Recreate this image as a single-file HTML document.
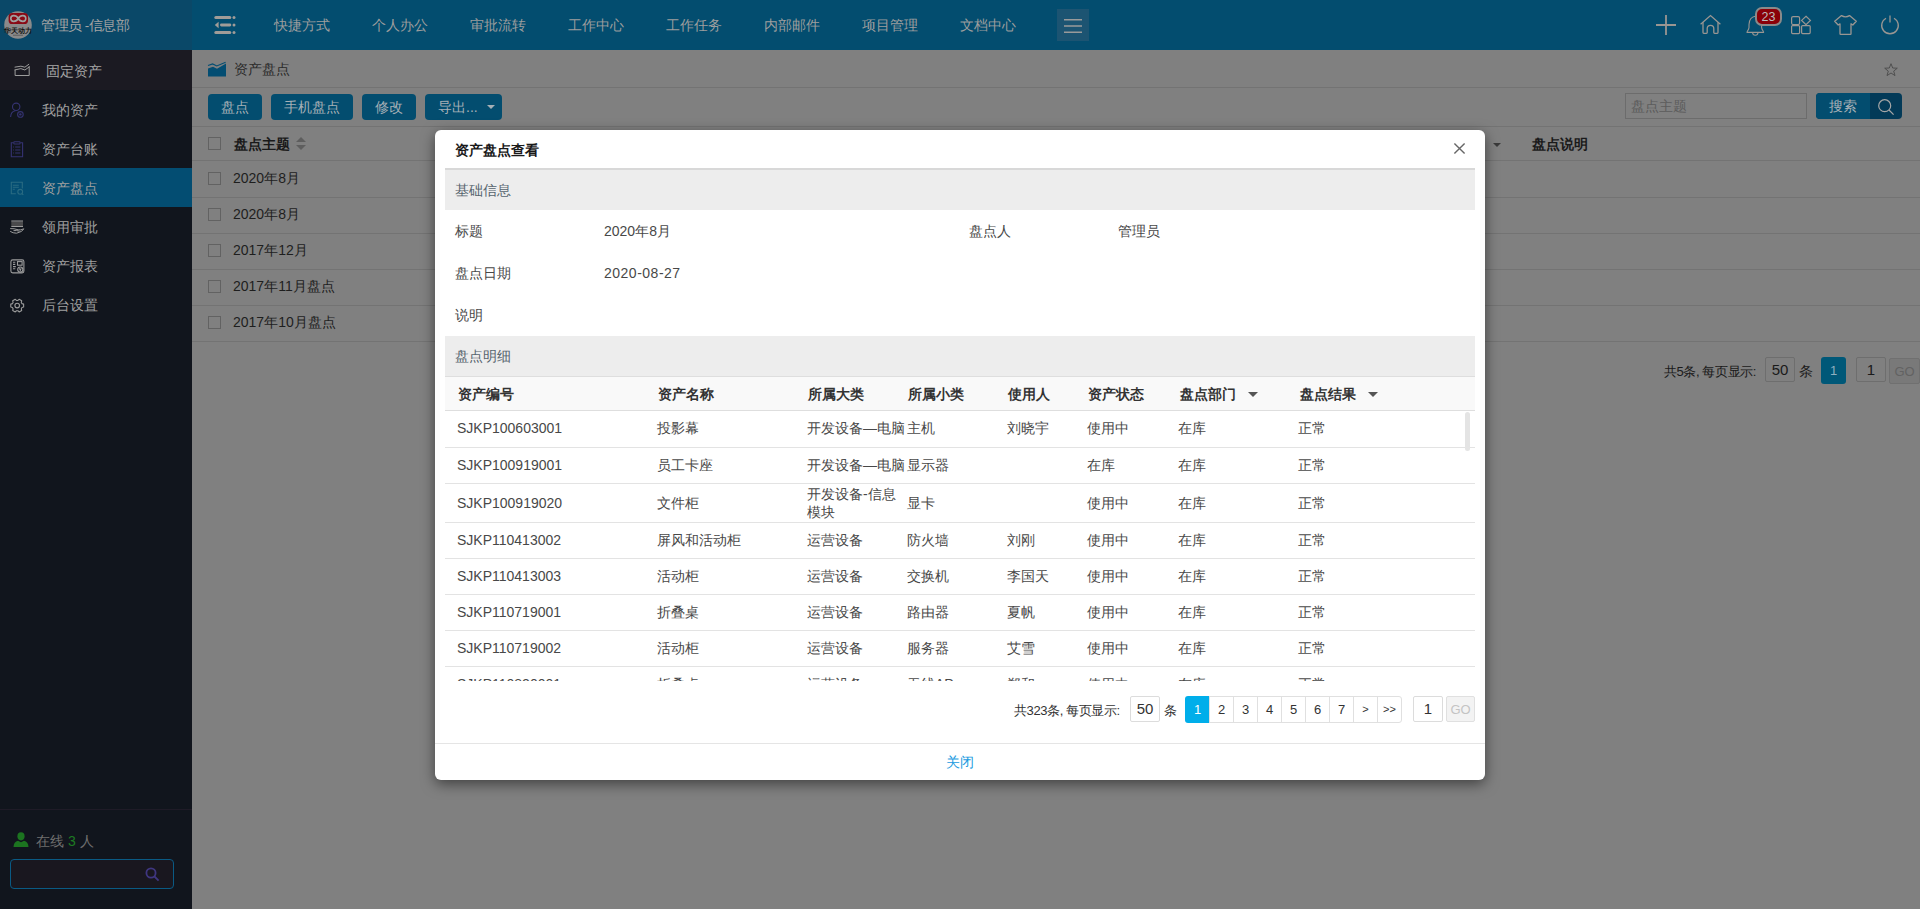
<!DOCTYPE html>
<html><head><meta charset="utf-8">
<style>
*{box-sizing:border-box;margin:0;padding:0}
html,body{width:1920px;height:909px;overflow:hidden;background:#808080;font-family:"Liberation Sans",sans-serif;font-size:14px;color:#1a1a1a}
.a{position:absolute;white-space:nowrap;line-height:16px}
svg{position:absolute;overflow:visible}
</style></head><body>
<div class="a" style="left:0;top:0;width:1920px;height:50px;background:#034d6f"></div>
<div class="a" style="left:0;top:0;width:192px;height:50px;background:#0a4868"></div>
<svg style="left:4px;top:11px" width="28" height="28" viewBox="0 0 28 28">
<circle cx="14" cy="14" r="13.8" fill="#8a8a8a"/>
<rect x="4.6" y="2" width="19.4" height="11" rx="3.6" fill="#8a0a16"/>
<path d="M14.3 7.5 C12 3.6 6.8 3.8 6.8 7.5 C6.8 11.2 12 11.4 14.3 7.5 C16.6 3.6 21.8 3.8 21.8 7.5 C21.8 11.2 16.6 11.4 14.3 7.5Z" fill="none" stroke="#a0a0a0" stroke-width="1.6"/>
<text x="14" y="21.6" text-anchor="middle" font-size="6.6" font-weight="bold" fill="#111" font-family="Liberation Sans">华天动力</text>
<rect x="9" y="23.6" width="10" height="1.4" fill="#6a6a6a"/>
</svg>
<div class="a" style="left:41px;top:17.8px;color:#a4a4a4;font-size:13.5px;letter-spacing:-0.5px">管理员 -信息部</div>
<svg style="left:214px;top:16px" width="22" height="18" viewBox="0 0 22 18">
<g fill="#a09c98">
<rect x="0.3" y="0" width="17" height="3" rx="1.5"/><circle cx="20" cy="1.5" r="1.5"/>
<path d="M0.8 9 L4.6 5.7 L4.6 12.3Z"/><rect x="6" y="7.6" width="11.3" height="2.8" rx="1.4"/><circle cx="20" cy="9" r="1.5"/>
<rect x="0.3" y="15" width="17" height="3" rx="1.5"/><circle cx="20" cy="16.5" r="1.5"/>
</g></svg>
<div class="a" style="left:274px;top:16.5px;color:#9e9e9e">快捷方式</div>
<div class="a" style="left:372px;top:16.5px;color:#9e9e9e">个人办公</div>
<div class="a" style="left:470px;top:16.5px;color:#9e9e9e">审批流转</div>
<div class="a" style="left:568px;top:16.5px;color:#9e9e9e">工作中心</div>
<div class="a" style="left:666px;top:16.5px;color:#9e9e9e">工作任务</div>
<div class="a" style="left:764px;top:16.5px;color:#9e9e9e">内部邮件</div>
<div class="a" style="left:862px;top:16.5px;color:#9e9e9e">项目管理</div>
<div class="a" style="left:960px;top:16.5px;color:#9e9e9e">文档中心</div>
<div class="a" style="left:1057px;top:9px;width:32px;height:32px;background:#1c5472"></div>
<svg style="left:1064px;top:19px" width="18" height="14" viewBox="0 0 18 14">
<g stroke="#9a9a9a" stroke-width="1.6"><path d="M0 0.8H18M0 7H18M0 13.2H18"/></g></svg>
<svg style="left:1656px;top:15px" width="20" height="20" viewBox="0 0 20 20"><path d="M10 0V20M0 10H20" stroke="#9a9692" stroke-width="1.8"/></svg>
<svg style="left:1700px;top:15px" width="21" height="19" viewBox="0 0 21 19">
<path d="M0.6 9.2 L10.5 0.6 L20.4 9.2" fill="none" stroke="#9a9692" stroke-width="1.3"/>
<path d="M3 7.2 V17.6 Q3 18.4 3.8 18.4 H6.4 Q7.2 18.4 7.2 17.6 V13.5 Q7.2 10.3 10.5 10.3 Q13.8 10.3 13.8 13.5 V17.6 Q13.8 18.4 14.6 18.4 H17.2 Q18 18.4 18 17.6 V7.2" fill="none" stroke="#9a9692" stroke-width="1.3"/>
</svg>
<svg style="left:1746px;top:15px" width="19" height="21" viewBox="0 0 19 21">
<path d="M9.3 1.2 Q3.3 2 3 9.5 V12.5 Q3 14 1.2 16.5 Q0.5 17.4 1.6 17.4 H17 Q18.1 17.4 17.4 16.5 Q15.6 14 15.6 12.5 V9.5 Q15.3 2 9.3 1.2Z" fill="none" stroke="#9a9692" stroke-width="1.1"/>
<path d="M6.6 17.8 Q6.8 20.2 9.3 20.2 Q11.8 20.2 12 17.8" fill="none" stroke="#9a9692" stroke-width="1.1"/>
</svg>
<div class="a" style="left:1755px;top:7px;width:27px;height:19px;background:#8a0008;border:2px solid #8a8a8a;border-radius:7px"></div>
<div class="a" style="left:1755px;top:8.5px;width:27px;text-align:center;font-size:12.5px;color:#bcbcbc;line-height:16px">23</div>
<svg style="left:1791px;top:16px" width="20" height="18" viewBox="0 0 20 18">
<g fill="none" stroke="#9a9692" stroke-width="1.2">
<rect x="0.6" y="0.6" width="8" height="8" rx="1.5"/>
<path d="M15 0.3 L19.4 4.4 L15 8.7 L10.6 4.4Z"/>
<rect x="0.6" y="9.6" width="8" height="8" rx="1"/>
<rect x="10.6" y="9.6" width="8.6" height="8" rx="1"/>
</g></svg>
<svg style="left:1834px;top:15px" width="23" height="20" viewBox="0 0 23 20">
<path d="M7.5 0.6 Q11.5 3 15.5 0.6 L22.3 6.3 L18.8 10 L17 8.8 V18.8 Q17 19.4 16.4 19.4 H6.6 Q6 19.4 6 18.8 V8.8 L4.2 10 L0.7 6.3Z" fill="none" stroke="#9a9692" stroke-width="1.3" stroke-linejoin="round"/>
</svg>
<svg style="left:1881px;top:15px" width="18" height="19" viewBox="0 0 18 19">
<path d="M5 3.2 A8.3 8.3 0 1 0 13 3.2" fill="none" stroke="#9a9692" stroke-width="1.3"/>
<path d="M9 0.5 V7.5" stroke="#9a9692" stroke-width="1.3"/>
</svg>
<div class="a" style="left:0;top:50px;width:192px;height:859px;background:#11151d"></div>
<div class="a" style="left:0;top:50px;width:192px;height:40px;background:#1b1a22"></div>
<div class="a" style="left:0;top:168px;width:192px;height:39px;background:#034d72"></div>
<div class="a" style="left:46px;top:62.5px;color:#a6a6a6">固定资产</div>
<div class="a" style="left:42px;top:101.5px;color:#a0a0a0">我的资产</div>
<div class="a" style="left:42px;top:140.5px;color:#a0a0a0">资产台账</div>
<div class="a" style="left:42px;top:179.5px;color:#a0a0a0">资产盘点</div>
<div class="a" style="left:42px;top:218.5px;color:#a0a0a0">领用审批</div>
<div class="a" style="left:42px;top:257.5px;color:#a0a0a0">资产报表</div>
<div class="a" style="left:42px;top:296.5px;color:#a0a0a0">后台设置</div>
<svg style="left:14px;top:63px" width="16" height="14" viewBox="0 0 16 14">
<g fill="none" stroke="#9c9c9c" stroke-width="1">
<path d="M1.1 6.6 V12.5 H15.2 V3"/>
<path d="M0.6 4.2 L6.9 3.2 L10.9 4.2 L15.1 1.1"/>
<path d="M0.6 7 L6.9 5.6 L10.9 7 L15.1 4"/>
</g></svg>
<svg style="left:10px;top:102px" width="15" height="16" viewBox="0 0 15 16">
<g fill="none" stroke="#353371" stroke-width="1.1">
<circle cx="6.2" cy="4.8" r="3.7"/>
<path d="M0.6 15 Q0.8 9.5 5.5 8.8"/>
<circle cx="10.4" cy="12.4" r="2.8"/>
</g><circle cx="10.4" cy="12.4" r="1.2" fill="#353371"/></svg>
<svg style="left:10px;top:141px" width="14" height="17" viewBox="0 0 14 17">
<g fill="none" stroke="#353371" stroke-width="1.1">
<path d="M3.5 1.8 H1.3 V15.7 H12.6 V1.8 H10.5"/>
<rect x="3.8" y="0.8" width="6.3" height="2.2" rx="0.8"/>
<path d="M3 6 H3.8 M5.2 6 H10.4 M3 9 H3.8 M5.2 9 H10.4 M3 12 H3.8 M5.2 12 H10.4"/>
</g></svg>
<svg style="left:10px;top:181px" width="14" height="15" viewBox="0 0 14 15">
<g fill="none" stroke="#2a6b82" stroke-width="1.1">
<path d="M5.8 12.7 H1.3 V1.3 H12.3 V7.4"/>
<path d="M2.8 4.3 H8.8 M2.8 6.3 H8.8 M2.8 8.3 H4.8"/>
<circle cx="10.2" cy="10.8" r="2.4"/><path d="M11.9 12.5 L13.3 13.9"/>
</g></svg>
<svg style="left:10px;top:220px" width="15" height="14" viewBox="0 0 15 14">
<rect x="1.3" y="1.5" width="11.7" height="4.5" fill="#4a4a4c"/>
<g fill="none" stroke="#9c9c9c" stroke-width="1">
<path d="M1.3 1 H13 M1.3 6.5 H13"/>
<path d="M0.2 8.6 Q4 8.3 8.2 9.8 Q10.5 10.4 13.8 8.8 Q12.8 11.8 6.6 13.2 Q3 13.2 0.2 11.4"/>
<path d="M3.5 10.6 Q6.5 10.2 9.6 11.2"/>
</g></svg>
<svg style="left:10px;top:259px" width="15" height="15" viewBox="0 0 15 15">
<g fill="none" stroke="#9c9c9c" stroke-width="1.1">
<rect x="0.9" y="0.9" width="13" height="13" rx="1.8"/>
<path d="M3 3.2 H5.3 M3 5.4 H5.3 M3 7.6 H5.8 M3 9.8 H5.3"/>
<rect x="7.5" y="2.6" width="4.6" height="3.6"/>
<circle cx="10.3" cy="10.6" r="2.6"/>
<path d="M9.2 9.3 L10.3 10.8 L11.4 9.3 M10.3 10.8 V12.4"/>
</g></svg>
<svg style="left:10px;top:299px" width="15" height="14" viewBox="0 0 15 14">
<g fill="none" stroke="#9c9c9c" stroke-width="1.1">
<path d="M12.02 4.65 L13.63 5.12 L13.63 8.08 L12.02 8.55 L11.30 9.80 L11.70 11.43 L9.13 12.91 L7.92 11.75 L6.48 11.75 L5.27 12.91 L2.70 11.43 L3.10 9.80 L2.38 8.55 L0.77 8.08 L0.77 5.12 L2.38 4.65 L3.10 3.40 L2.70 1.77 L5.27 0.29 L6.48 1.45 L7.92 1.45 L9.13 0.29 L11.70 1.77 L11.30 3.40Z" stroke-linejoin="round"/>
<circle cx="7.2" cy="6.6" r="2.3"/>
</g></svg>
<div class="a" style="left:0;top:809px;width:192px;height:1px;background:#1f1b27"></div>
<svg style="left:13px;top:832px" width="16" height="15" viewBox="0 0 16 15">
<g fill="#1c7420"><ellipse cx="8" cy="4.3" rx="3.6" ry="4.1"/><path d="M0.5 15 Q0.8 9.5 5 8.8 L8 10.2 L11 8.8 Q15.2 9.5 15.5 15Z"/></g></svg>
<div class="a" style="left:36px;top:832.5px;color:#6e6e6e">在线 <span style="color:#1d7a22">3</span> 人</div>
<div class="a" style="left:10px;top:859px;width:164px;height:30px;border:1px solid #0a5a84;border-radius:4px;background:#19171f"></div>
<svg style="left:145px;top:867px" width="15" height="15" viewBox="0 0 15 15">
<g fill="none" stroke="#3f3680" stroke-width="1.8"><circle cx="6" cy="6" r="4.6"/><path d="M9.5 9.5 L13.6 13.6"/></g></svg>
<svg style="left:208px;top:62px" width="18" height="15" viewBox="0 0 18 15">
<path d="M0 6.5 L5 4.8 L9 6.8 L18 1.6 V14.6 H0Z" fill="#034d72"/>
<path d="M0 3.4 L4.6 1.9 L8.8 3.9 L17.6 0.2" fill="none" stroke="#034d72" stroke-width="1.1"/>
</svg>
<div class="a" style="left:234px;top:61.0px;color:#2a2a2a">资产盘点</div>
<svg style="left:1884px;top:63px" width="14" height="14" viewBox="0 0 14 14">
<path d="M7 0.7 L8.7 5 L13.3 5.2 L9.7 8.1 L11 12.6 L7 10 L3 12.6 L4.3 8.1 L0.7 5.2 L5.3 5Z" fill="none" stroke="#4a4a4a" stroke-width="0.9" stroke-linejoin="round"/></svg>
<div class="a" style="left:192px;top:87px;width:1728px;height:1px;background:#737373"></div>
<div class="a" style="left:208px;top:94px;width:54px;height:26px;background:#034d6f;border-radius:4px"></div>
<div class="a" style="left:208px;top:98.5px;width:54px;text-align:center;color:#a6b0b6">盘点</div>
<div class="a" style="left:271px;top:94px;width:82px;height:26px;background:#034d6f;border-radius:4px"></div>
<div class="a" style="left:271px;top:98.5px;width:82px;text-align:center;color:#a6b0b6">手机盘点</div>
<div class="a" style="left:362px;top:94px;width:54px;height:26px;background:#034d6f;border-radius:4px"></div>
<div class="a" style="left:362px;top:98.5px;width:54px;text-align:center;color:#a6b0b6">修改</div>
<div class="a" style="left:425px;top:94px;width:77px;height:26px;background:#034d6f;border-radius:4px"></div>
<div class="a" style="left:438px;top:98.5px;color:#a6b0b6">导出...</div>
<div class="a" style="left:487px;top:105px;width:0;height:0;border-left:4.5px solid transparent;border-right:4.5px solid transparent;border-top:4.5px solid #a6b0b6"></div>
<div class="a" style="left:1625px;top:93px;width:182px;height:26px;border:1px solid #6c6c6c"></div>
<div class="a" style="left:1631px;top:97.5px;color:#5c5c5c">盘点主题</div>
<div class="a" style="left:1816px;top:93px;width:86px;height:26px;background:#033a58;border-radius:4px"></div>
<div class="a" style="left:1816px;top:93px;width:54px;height:26px;background:#034d6f;border-radius:4px 0 0 4px"></div>
<div class="a" style="left:1816px;top:97.5px;color:#a6b0b6"><div style="width:54px;text-align:center">搜索</div></div>
<svg style="left:1878px;top:99px" width="17" height="17" viewBox="0 0 17 17">
<g fill="none" stroke="#a6a6a6" stroke-width="1.2"><circle cx="6.7" cy="6.7" r="6"/><path d="M11 11 L15.6 15.6"/></g></svg>
<div class="a" style="left:192px;top:126px;width:1728px;height:1px;background:#737373"></div>
<div class="a" style="left:208px;top:137px;width:13px;height:13px;border:1px solid #626262"></div>
<div class="a" style="left:234px;top:135.5px;font-weight:bold;color:#1a1a1a">盘点主题</div>
<div class="a" style="left:296px;top:137px;width:0;height:0;border-left:5px solid transparent;border-right:5px solid transparent;border-bottom:5px solid #5e5e5e"></div>
<div class="a" style="left:296px;top:145px;width:0;height:0;border-left:5px solid transparent;border-right:5px solid transparent;border-top:5px solid #5e5e5e"></div>
<div class="a" style="left:1493px;top:143px;width:0;height:0;border-left:4.5px solid transparent;border-right:4.5px solid transparent;border-top:4.5px solid #3a3a3a"></div>
<div class="a" style="left:1532px;top:135.5px;font-weight:bold;color:#1a1a1a">盘点说明</div>
<div class="a" style="left:192px;top:160px;width:1728px;height:1px;background:#737373"></div>
<div class="a" style="left:208px;top:172px;width:13px;height:13px;border:1px solid #626262"></div>
<div class="a" style="left:233px;top:170.2px;color:#1e1e1e">2020年8月</div>
<div class="a" style="left:192px;top:197px;width:1728px;height:1px;background:#737373"></div>
<div class="a" style="left:208px;top:208px;width:13px;height:13px;border:1px solid #626262"></div>
<div class="a" style="left:233px;top:206.2px;color:#1e1e1e">2020年8月</div>
<div class="a" style="left:192px;top:233px;width:1728px;height:1px;background:#737373"></div>
<div class="a" style="left:208px;top:244px;width:13px;height:13px;border:1px solid #626262"></div>
<div class="a" style="left:233px;top:242.2px;color:#1e1e1e">2017年12月</div>
<div class="a" style="left:192px;top:269px;width:1728px;height:1px;background:#737373"></div>
<div class="a" style="left:208px;top:280px;width:13px;height:13px;border:1px solid #626262"></div>
<div class="a" style="left:233px;top:278.2px;color:#1e1e1e">2017年11月盘点</div>
<div class="a" style="left:192px;top:305px;width:1728px;height:1px;background:#737373"></div>
<div class="a" style="left:208px;top:316px;width:13px;height:13px;border:1px solid #626262"></div>
<div class="a" style="left:233px;top:314.2px;color:#1e1e1e">2017年10月盘点</div>
<div class="a" style="left:192px;top:341px;width:1728px;height:1px;background:#737373"></div>
<div class="a" style="left:1664px;top:364.0px;color:#1a1a1a;font-size:13px;letter-spacing:-0.4px">共5条, 每页显示:</div>
<div class="a" style="left:1765px;top:357px;width:30px;height:25px;border:1px solid #6e6e6e;border-radius:2px;text-align:center;line-height:23px;font-size:15px;color:#1a1a1a">50</div>
<div class="a" style="left:1799px;top:363.0px;color:#1a1a1a">条</div>
<div class="a" style="left:1821px;top:357px;width:25px;height:27px;background:#005878;border-radius:3px;text-align:center;line-height:27px;font-size:13px;color:#8fb0c0">1</div>
<div class="a" style="left:1856px;top:357px;width:30px;height:25px;border:1px solid #6e6e6e;border-radius:2px;text-align:center;line-height:23px;font-size:15px;color:#1a1a1a">1</div>
<div class="a" style="left:1889px;top:358px;width:31px;height:26px;border:1px solid #707070;background:#797979;border-radius:2px;text-align:center;line-height:26px;font-size:13px;color:#626262">GO</div>
<div class="a" style="left:435px;top:130px;width:1050px;height:650px;background:#fff;border-radius:6px;box-shadow:0 4px 14px rgba(0,0,0,.5)"></div>
<div class="a" style="left:455px;top:141.5px;font-weight:bold;color:#1a1a1a">资产盘点查看</div>
<svg style="left:1454px;top:143px" width="11" height="11" viewBox="0 0 11 11"><path d="M0.4 0.4L10.6 10.6M10.6 0.4L0.4 10.6" stroke="#666" stroke-width="1.4"/></svg>
<div class="a" style="left:445px;top:168px;width:1030px;height:42px;background:#ededed;border-top:2px solid #d8d8d8"></div>
<div class="a" style="left:455px;top:181.5px;color:#56646e">基础信息</div>
<div class="a" style="left:455px;top:222.5px;color:#484848">标题</div>
<div class="a" style="left:604px;top:222.5px;color:#484848">2020年8月</div>
<div class="a" style="left:969px;top:222.5px;color:#484848">盘点人</div>
<div class="a" style="left:1118px;top:222.5px;color:#484848">管理员</div>
<div class="a" style="left:455px;top:264.5px;color:#484848">盘点日期</div>
<div class="a" style="left:604px;top:264.5px;color:#484848;letter-spacing:0.5px">2020-08-27</div>
<div class="a" style="left:455px;top:306.5px;color:#484848">说明</div>
<div class="a" style="left:445px;top:336px;width:1030px;height:40px;background:#ededed"></div>
<div class="a" style="left:455px;top:347.5px;color:#56646e">盘点明细</div>
<div class="a" style="left:445px;top:376px;width:1030px;height:35px;background:#f9f9f9;border-top:1px solid #dedede;border-bottom:1px solid #dedede"></div>
<div class="a" style="left:458px;top:385.5px;font-weight:bold;color:#333">资产编号</div>
<div class="a" style="left:658px;top:385.5px;font-weight:bold;color:#333">资产名称</div>
<div class="a" style="left:808px;top:385.5px;font-weight:bold;color:#333">所属大类</div>
<div class="a" style="left:908px;top:385.5px;font-weight:bold;color:#333">所属小类</div>
<div class="a" style="left:1008px;top:385.5px;font-weight:bold;color:#333">使用人</div>
<div class="a" style="left:1088px;top:385.5px;font-weight:bold;color:#333">资产状态</div>
<div class="a" style="left:1180px;top:385.5px;font-weight:bold;color:#333">盘点部门</div>
<div class="a" style="left:1300px;top:385.5px;font-weight:bold;color:#333">盘点结果</div>
<div class="a" style="left:1248px;top:392px;width:0;height:0;border-left:5px solid transparent;border-right:5px solid transparent;border-top:5px solid #555"></div>
<div class="a" style="left:1368px;top:392px;width:0;height:0;border-left:5px solid transparent;border-right:5px solid transparent;border-top:5px solid #555"></div>
<div class="a" style="left:445px;top:411px;width:1030px;height:270px;overflow:hidden">
<div class="a" style="left:12px;top:9.1px;color:#484848">SJKP100603001</div>
<div class="a" style="left:212px;top:9.1px;color:#484848">投影幕</div>
<div class="a" style="left:362px;top:9.1px;color:#484848">开发设备—电脑</div>
<div class="a" style="left:462px;top:9.1px;color:#484848">主机</div>
<div class="a" style="left:562px;top:9.1px;color:#484848">刘晓宇</div>
<div class="a" style="left:642px;top:9.1px;color:#484848">使用中</div>
<div class="a" style="left:733px;top:9.1px;color:#484848">在库</div>
<div class="a" style="left:853px;top:9.1px;color:#484848">正常</div>
<div class="a" style="left:12px;top:45.8px;color:#484848">SJKP100919001</div>
<div class="a" style="left:212px;top:45.8px;color:#484848">员工卡座</div>
<div class="a" style="left:362px;top:45.8px;color:#484848">开发设备—电脑</div>
<div class="a" style="left:462px;top:45.8px;color:#484848">显示器</div>
<div class="a" style="left:642px;top:45.8px;color:#484848">在库</div>
<div class="a" style="left:733px;top:45.8px;color:#484848">在库</div>
<div class="a" style="left:853px;top:45.8px;color:#484848">正常</div>
<div class="a" style="left:12px;top:83.5px;color:#484848">SJKP100919020</div>
<div class="a" style="left:212px;top:83.5px;color:#484848">文件柜</div>
<div class="a" style="left:362px;top:74px;line-height:18px;color:#484848">开发设备-信息<br>模块</div>
<div class="a" style="left:462px;top:83.5px;color:#484848">显卡</div>
<div class="a" style="left:642px;top:83.5px;color:#484848">使用中</div>
<div class="a" style="left:733px;top:83.5px;color:#484848">在库</div>
<div class="a" style="left:853px;top:83.5px;color:#484848">正常</div>
<div class="a" style="left:12px;top:120.5px;color:#484848">SJKP110413002</div>
<div class="a" style="left:212px;top:120.5px;color:#484848">屏风和活动柜</div>
<div class="a" style="left:362px;top:120.5px;color:#484848">运营设备</div>
<div class="a" style="left:462px;top:120.5px;color:#484848">防火墙</div>
<div class="a" style="left:562px;top:120.5px;color:#484848">刘刚</div>
<div class="a" style="left:642px;top:120.5px;color:#484848">使用中</div>
<div class="a" style="left:733px;top:120.5px;color:#484848">在库</div>
<div class="a" style="left:853px;top:120.5px;color:#484848">正常</div>
<div class="a" style="left:12px;top:156.5px;color:#484848">SJKP110413003</div>
<div class="a" style="left:212px;top:156.5px;color:#484848">活动柜</div>
<div class="a" style="left:362px;top:156.5px;color:#484848">运营设备</div>
<div class="a" style="left:462px;top:156.5px;color:#484848">交换机</div>
<div class="a" style="left:562px;top:156.5px;color:#484848">李国天</div>
<div class="a" style="left:642px;top:156.5px;color:#484848">使用中</div>
<div class="a" style="left:733px;top:156.5px;color:#484848">在库</div>
<div class="a" style="left:853px;top:156.5px;color:#484848">正常</div>
<div class="a" style="left:12px;top:192.5px;color:#484848">SJKP110719001</div>
<div class="a" style="left:212px;top:192.5px;color:#484848">折叠桌</div>
<div class="a" style="left:362px;top:192.5px;color:#484848">运营设备</div>
<div class="a" style="left:462px;top:192.5px;color:#484848">路由器</div>
<div class="a" style="left:562px;top:192.5px;color:#484848">夏帆</div>
<div class="a" style="left:642px;top:192.5px;color:#484848">使用中</div>
<div class="a" style="left:733px;top:192.5px;color:#484848">在库</div>
<div class="a" style="left:853px;top:192.5px;color:#484848">正常</div>
<div class="a" style="left:12px;top:228.5px;color:#484848">SJKP110719002</div>
<div class="a" style="left:212px;top:228.5px;color:#484848">活动柜</div>
<div class="a" style="left:362px;top:228.5px;color:#484848">运营设备</div>
<div class="a" style="left:462px;top:228.5px;color:#484848">服务器</div>
<div class="a" style="left:562px;top:228.5px;color:#484848">艾雪</div>
<div class="a" style="left:642px;top:228.5px;color:#484848">使用中</div>
<div class="a" style="left:733px;top:228.5px;color:#484848">在库</div>
<div class="a" style="left:853px;top:228.5px;color:#484848">正常</div>
<div class="a" style="left:12px;top:264.5px;color:#484848">SJKP110820001</div>
<div class="a" style="left:212px;top:264.5px;color:#484848">折叠桌</div>
<div class="a" style="left:362px;top:264.5px;color:#484848">运营设备</div>
<div class="a" style="left:462px;top:264.5px;color:#484848">无线AP</div>
<div class="a" style="left:562px;top:264.5px;color:#484848">郑和</div>
<div class="a" style="left:642px;top:264.5px;color:#484848">使用中</div>
<div class="a" style="left:733px;top:264.5px;color:#484848">在库</div>
<div class="a" style="left:853px;top:264.5px;color:#484848">正常</div>
<div class="a" style="left:0;top:36px;width:1030px;height:1px;background:#e3e3e3"></div>
<div class="a" style="left:0;top:72px;width:1030px;height:1px;background:#e3e3e3"></div>
<div class="a" style="left:0;top:111px;width:1030px;height:1px;background:#e3e3e3"></div>
<div class="a" style="left:0;top:147px;width:1030px;height:1px;background:#e3e3e3"></div>
<div class="a" style="left:0;top:183px;width:1030px;height:1px;background:#e3e3e3"></div>
<div class="a" style="left:0;top:219px;width:1030px;height:1px;background:#e3e3e3"></div>
<div class="a" style="left:0;top:255px;width:1030px;height:1px;background:#e3e3e3"></div>
<div class="a" style="left:1020px;top:1px;width:5px;height:39px;background:#e4e4e4;border-radius:3px"></div>
</div>
<div class="a" style="left:1014px;top:703.0px;color:#333;font-size:13px;letter-spacing:-0.4px">共323条, 每页显示:</div>
<div class="a" style="left:1130px;top:696px;width:30px;height:26px;border:1px solid #dcdcdc;border-radius:2px;text-align:center;line-height:23px;font-size:15px;color:#333">50</div>
<div class="a" style="left:1164px;top:703.0px;color:#333;font-size:13px">条</div>
<div class="a" style="left:1185px;top:696px;width:25px;height:27px;background:#00aeea;border-radius:3px 0 0 3px;color:#fff;text-align:center;line-height:27px;font-size:13px">1</div>
<div class="a" style="left:1209px;top:696px;width:25px;height:27px;border:1px solid #e0e0e0;color:#333;text-align:center;line-height:25px;font-size:13px">2</div>
<div class="a" style="left:1233px;top:696px;width:25px;height:27px;border:1px solid #e0e0e0;color:#333;text-align:center;line-height:25px;font-size:13px">3</div>
<div class="a" style="left:1257px;top:696px;width:25px;height:27px;border:1px solid #e0e0e0;color:#333;text-align:center;line-height:25px;font-size:13px">4</div>
<div class="a" style="left:1281px;top:696px;width:25px;height:27px;border:1px solid #e0e0e0;color:#333;text-align:center;line-height:25px;font-size:13px">5</div>
<div class="a" style="left:1305px;top:696px;width:25px;height:27px;border:1px solid #e0e0e0;color:#333;text-align:center;line-height:25px;font-size:13px">6</div>
<div class="a" style="left:1329px;top:696px;width:25px;height:27px;border:1px solid #e0e0e0;color:#333;text-align:center;line-height:25px;font-size:13px">7</div>
<div class="a" style="left:1353px;top:696px;width:25px;height:27px;border:1px solid #e0e0e0;color:#333;text-align:center;line-height:25px;font-size:11px">&gt;</div>
<div class="a" style="left:1377px;top:696px;width:25px;height:27px;border:1px solid #e0e0e0;border-radius:0 3px 3px 0;color:#333;text-align:center;line-height:25px;font-size:11px">&gt;&gt;</div>
<div class="a" style="left:1413px;top:696px;width:30px;height:26px;border:1px solid #dcdcdc;border-radius:2px;text-align:center;line-height:23px;font-size:15px;color:#333">1</div>
<div class="a" style="left:1446px;top:696px;width:29px;height:26px;border:1px solid #e0e0e0;background:#f3f3f3;border-radius:2px;text-align:center;line-height:26px;font-size:13px;color:#c4c4c4">GO</div>
<div class="a" style="left:435px;top:743px;width:1050px;height:1px;background:#e5e5e5"></div>
<div class="a" style="left:946px;top:753.5px;color:#1a9be0">关闭</div>
</body></html>
